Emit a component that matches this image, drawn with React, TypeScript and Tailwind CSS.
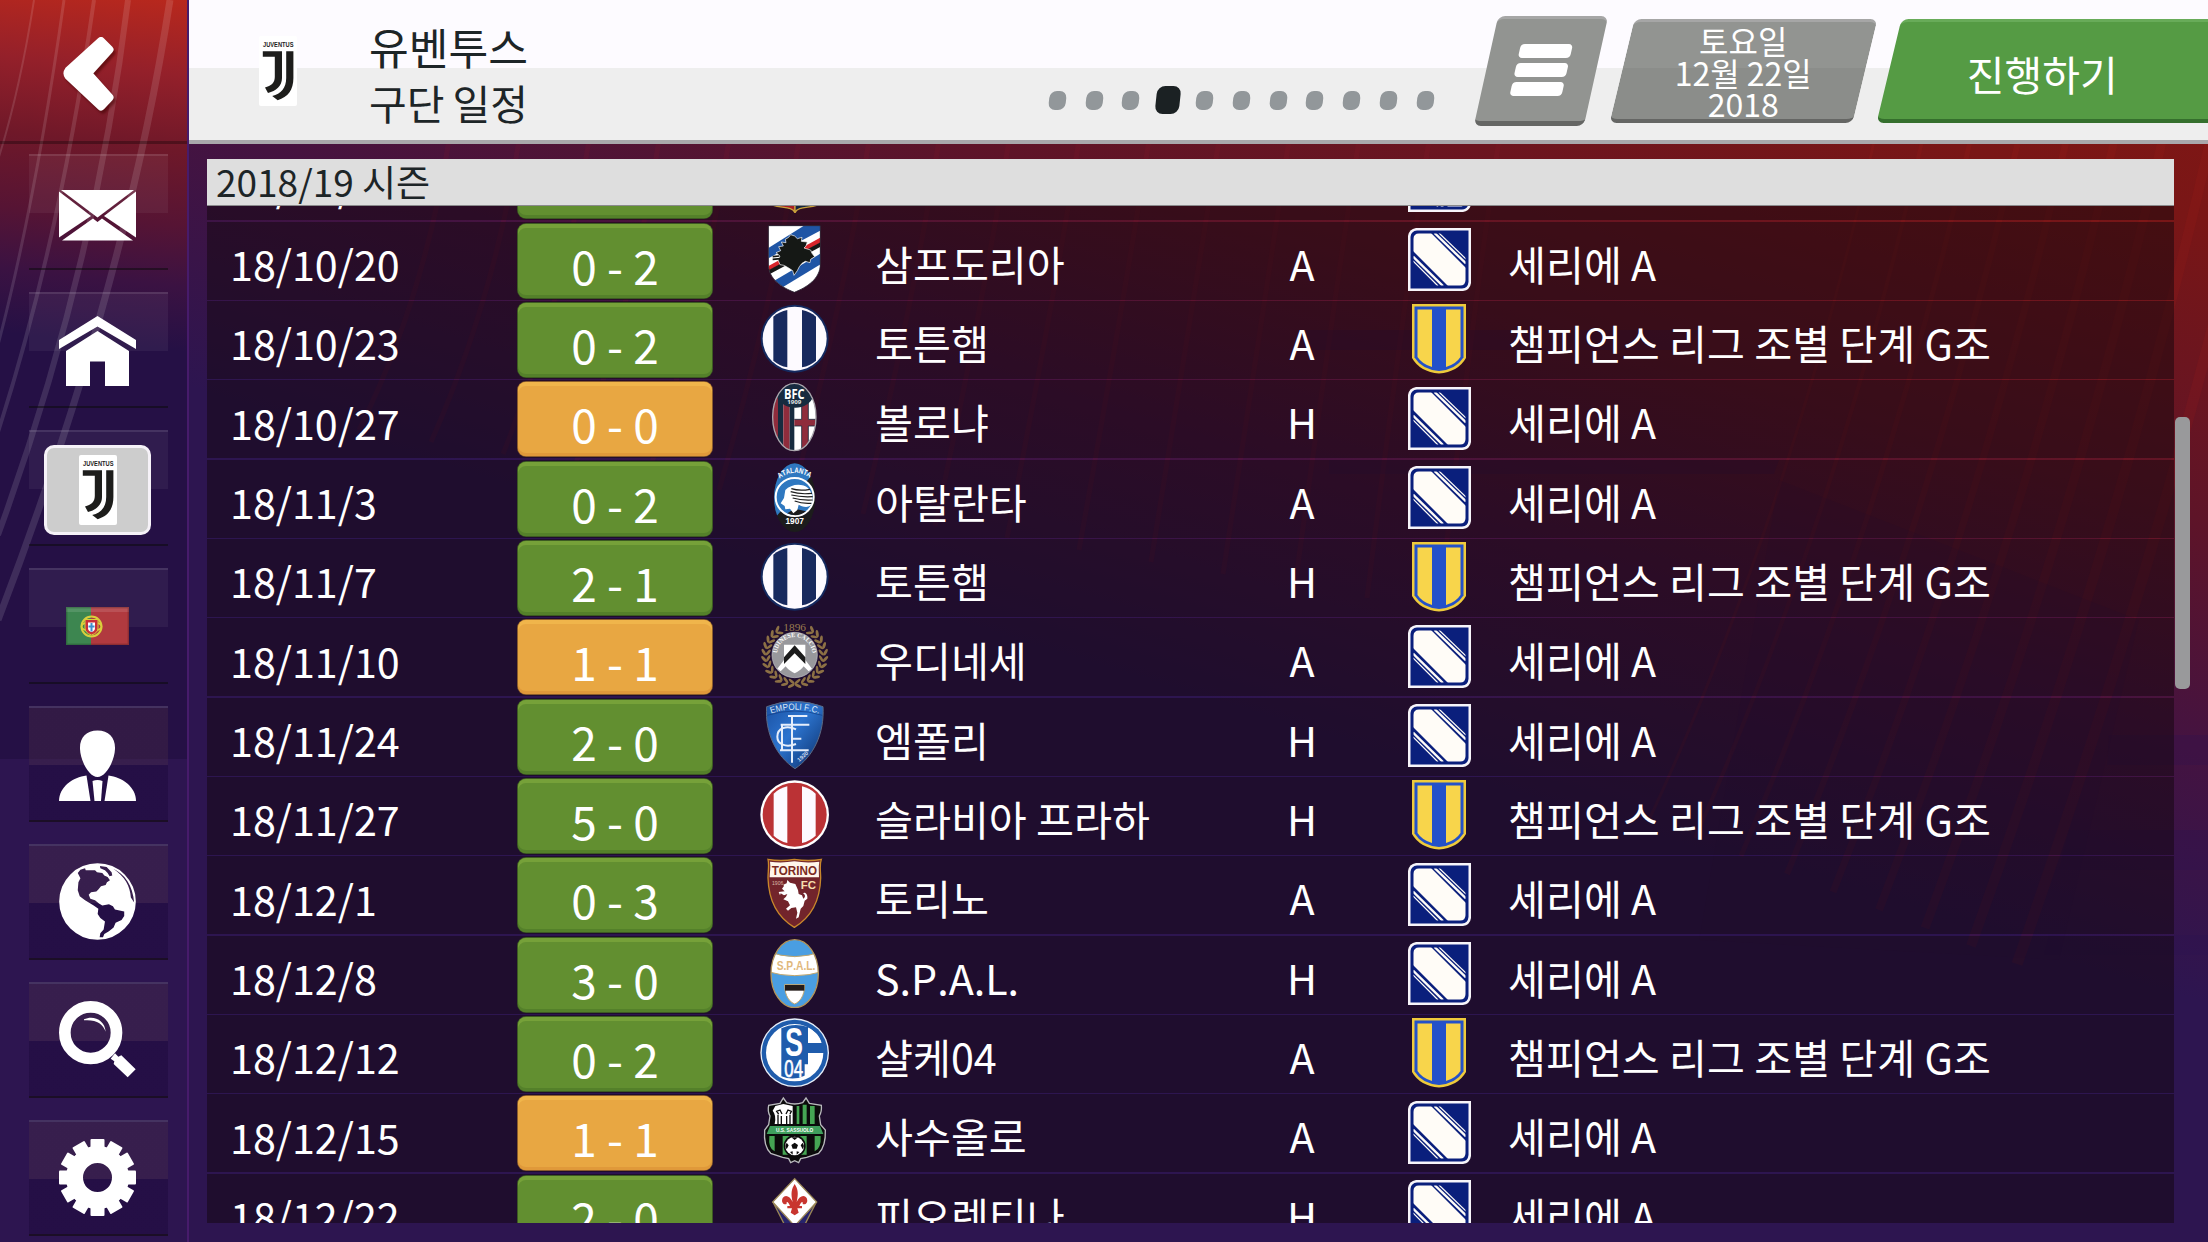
import type { ReactNode } from "react";

type Result = "win" | "draw";

interface Fixture {
  date: string;
  score: string;
  result: Result;
  team: string;
  crest: ReactNode;
  venue: "H" | "A";
  competition: "league" | "cup";
}

const LEAGUE = "세리에 A";
const CUP = "챔피언스 리그 조별 단계 G조";

/* ---------- crests ---------- */

function Crest({ children }: { children: ReactNode }) {
  return (
    <svg viewBox="0 0 210 210" className="block size-[70px]">
      {children}
    </svg>
  );
}

function JuventusCrest() {
  return (
    <svg viewBox="0 0 38 70" className="block h-[70px] w-[38px] shrink-0">
      <rect width="38" height="70" rx="2" fill="#fff" />
      <text
        x="4"
        y="10.5"
        fontSize="7.6"
        fontWeight="700"
        fontFamily="Liberation Sans, sans-serif"
        textLength="30.5"
        lengthAdjust="spacingAndGlyphs"
        fill="#1d1d1b"
      >
        JUVENTUS
      </text>
      <path d="M3.8 15.3H23V42C23 50 17 55 9 57L6 51.5C12 50 15.8 47 15.8 41V20.8H3.8Z" fill="#1d1d1b" />
      <path d="M27.2 15.3H34.4V42C34.4 54 29 61 18.7 64.2L13.2 60C22 58 27.2 52 27.2 42Z" fill="#1d1d1b" />
    </svg>
  );
}

function GenoaCrest() {
  return (
    <Crest>
      <path d="M40 10H105V206C98 188 66 192 40 184Z" fill="#a81f24" stroke="#c9a13b" strokeWidth="4" />
      <path d="M105 10H170V184C144 192 112 188 105 206Z" fill="#15263f" stroke="#c9a13b" strokeWidth="4" />
    </Crest>
  );
}

function SampdoriaCrest() {
  return (
    <Crest>
      <clipPath id="samp">
        <path d="M25 5H181V120C181 165 140 190 103 205C65 190 25 165 25 120Z" />
      </clipPath>
      <g clipPath="url(#samp)">
        <rect width="210" height="210" fill="#fff" />
        <path d="M15 78L140 0L190 -6L190 15L15 108Z" fill="#1f55a5" />
        <path d="M15 132L190 36V52L15 146Z" fill="#d8242b" />
        <path d="M15 144L190 50V64L15 158Z" fill="#161616" />
        <path d="M40 172L190 84V116L68 190Z" fill="#1f55a5" />
      </g>
      <path
        d="M76 46L86 40L92 32L104 36L112 44L126 40L124 52L142 54L138 66L132 72L152 78L156 88L164 98L152 106L150 116L136 112L126 118L118 128L112 140L102 154L98 140L86 132L72 124L60 122L54 108L60 96L48 86L62 80L56 68L70 66L64 54L78 56Z"
        fill="#151815"
        stroke="#fff"
        strokeWidth="2"
      />
      <path d="M38 98L58 96M38 106L62 104" stroke="#151815" strokeWidth="5" />
      <path d="M25 5H181V120C181 165 140 190 103 205C65 190 25 165 25 120Z" fill="none" stroke="#2a2433" strokeWidth="2.5" />
    </Crest>
  );
}

function TottenhamCrest() {
  return (
    <Crest>
      <circle cx="104" cy="107" r="102" fill="#14295f" />
      <circle cx="104" cy="107" r="96" fill="#fdfaff" />
      <path d="M40 41Q58 26 82 21V193Q58 188 40 173Z" fill="#182a5e" />
      <path d="M126 21Q150 26 168 41V173Q150 188 126 193Z" fill="#182a5e" />
    </Crest>
  );
}

function SlaviaCrest() {
  return (
    <Crest>
      <circle cx="104" cy="107" r="103" fill="#fff" />
      <circle cx="104" cy="107" r="96" fill="#bb3235" />
      <path d="M41 44Q58 28 82 22V192Q58 186 41 170Z" fill="#fdfaff" />
      <path d="M126 22Q150 28 167 44V170Q150 186 126 192Z" fill="#fdfaff" />
    </Crest>
  );
}

function BolognaCrest() {
  return (
    <Crest>
      <clipPath id="bologna">
        <ellipse cx="103" cy="105" rx="65" ry="101" />
      </clipPath>
      <g clipPath="url(#bologna)">
        <rect width="210" height="210" fill="#fff" />
        <rect x="30" width="24" height="210" fill="#8f2c3c" />
        <rect x="54" width="16" height="210" fill="#172b3f" />
        <rect x="70" width="19" height="210" fill="#8f2c3c" />
        <rect x="89" width="14" height="210" fill="#172b3f" />
        <rect x="125" width="20" height="210" fill="#8f2c3c" />
        <rect x="103" y="112" width="70" height="20" fill="#8f2c3c" />
        <path d="M125 60V112H103M145 60V112H170M103 132H125V210M145 210V132H170" fill="none" stroke="#172b3f" strokeWidth="2.5" />
        <path d="M45 0H160V40C150 90 62 90 50 40Z" fill="#172b3f" />
      </g>
      <text x="103" y="50" fontSize="43" textAnchor="middle" textLength="62" lengthAdjust="spacingAndGlyphs" fontWeight="700" fontFamily="Open Sans, sans-serif" fill="#fff">
        BFC
      </text>
      <text x="103" y="67" fontSize="18" textAnchor="middle" textLength="42" lengthAdjust="spacingAndGlyphs" fontWeight="700" fontFamily="Open Sans, sans-serif" fill="#e6e6e6">
        1909
      </text>
      <ellipse cx="103" cy="105" rx="65" ry="101" fill="none" stroke="#a8a5ab" strokeWidth="4" />
    </Crest>
  );
}

function AtalantaCrest() {
  return (
    <Crest>
      <clipPath id="atalanta">
        <ellipse cx="104" cy="107" rx="62" ry="103" />
      </clipPath>
      <g clipPath="url(#atalanta)">
        <rect width="210" height="210" fill="#1c1c1c" />
        <path d="M0 0H190L0 220Z" fill="#2f78c0" />
      </g>
      <circle cx="104" cy="105" r="57" fill="#2f78c0" stroke="#fff" strokeWidth="6" />
      <path d="M82 154L104 140L138 148A54 54 0 0 1 82 154Z" fill="#1c1c1c" />
      <path d="M76 84C92 66 126 62 144 78C160 94 160 116 152 130C140 140 124 132 116 128L112 144L100 154L90 140L76 142L74 132L62 124L72 108Z" fill="#fff" />
      <path
        d="M94 80Q118 88 150 82M92 89Q120 98 156 94M94 99Q122 106 158 104M98 108Q124 116 158 114M104 117Q126 126 154 124"
        fill="none"
        stroke="#1c1c1c"
        strokeWidth="3.5"
      />
      <path id="atalanta-arc" d="M58 50Q104 16 150 48" fill="none" />
      <text fontSize="23" fontWeight="700" fontFamily="Liberation Sans, sans-serif" fill="#fff">
        <textPath href="#atalanta-arc" startOffset="50%" textAnchor="middle" textLength="98" lengthAdjust="spacingAndGlyphs">
          ATALANTA
        </textPath>
      </text>
      <text x="104" y="187" fontSize="25" textAnchor="middle" fontWeight="700" fontFamily="Liberation Sans, sans-serif" fill="#fff">
        1907
      </text>
    </Crest>
  );
}

const LEAVES = Array.from({ length: 24 }, (_, i) => 34 + i * 12.7);

function UdineseCrest() {
  return (
    <Crest>
      {LEAVES.map((angle) => (
        <g key={angle} transform={`rotate(${angle} 104 105)`} fill="#8c7045">
          <ellipse cx="104" cy="12" rx="11" ry="4.4" transform={angle < 180 ? "rotate(-145 104 12)" : "rotate(-35 104 12)"} />
          <ellipse cx="104" cy="25" rx="11" ry="4" transform={angle < 180 ? "rotate(-215 104 25)" : "rotate(35 104 25)"} />
        </g>
      ))}
      <text x="104" y="32" fontSize="34" textAnchor="middle" fontFamily="Liberation Serif, serif" fill="#9a7c4e">
        1896
      </text>
      <circle cx="104" cy="105" r="68" fill="#98989c" stroke="#c4c4c8" strokeWidth="2" />
      <path id="udinese-arc" d="M51 104A53 53 0 0 1 157 104" fill="none" />
      <text fontSize="19" fontFamily="Liberation Serif, serif" fontWeight="700" fill="#fff">
        <textPath href="#udinese-arc" startOffset="50%" textAnchor="middle" textLength="158" lengthAdjust="spacingAndGlyphs">
          UDINESE CALCIO
        </textPath>
      </text>
      <path d="M72 74H136V124C136 140 120 152 104 160C88 152 72 140 72 124Z" fill="#fff" />
      <path d="M72 120L52 146L62 154L84 132ZM136 120L156 146L146 154L124 132Z" fill="#fff" />
      <path d="M104 76L136 112V132L104 100L72 132V112Z" fill="#1b1b1b" />
    </Crest>
  );
}

function EmpoliCrest() {
  return (
    <Crest>
      <linearGradient id="empoli" x1="0" x2="1" y1="0" y2="1">
        <stop offset="0" stopColor="#1a4fa0" />
        <stop offset="0.45" stopColor="#2c74cf" />
        <stop offset="1" stopColor="#0b2c66" />
      </linearGradient>
      <path d="M20 20Q104 -12 189 20C194 100 160 170 105 206C50 170 14 100 20 20Z" fill="url(#empoli)" stroke="#5b6b86" strokeWidth="3" />
      <path d="M22 46Q104 20 187 46" fill="none" stroke="#123d84" strokeWidth="2" />
      <path id="empoli-arc" d="M30 42Q104 16 180 42" fill="none" />
      <text fontSize="27" fontFamily="Liberation Sans, sans-serif" fill="#dfe9f7">
        <textPath href="#empoli-arc" startOffset="50%" textAnchor="middle" textLength="146" lengthAdjust="spacingAndGlyphs">
          EMPOLI F.C.
        </textPath>
      </text>
      <g fill="none" stroke="#e6eefb" strokeWidth="6">
        <path d="M84 48H142M62 74H148M96 48V188M66 74V152M96 116H124M60 151H146" />
        <path d="M108 88C80 74 52 84 52 110C52 132 76 144 108 132" />
      </g>
      <text x="118" y="186" fontSize="17" transform="rotate(-42 118 186)" fontFamily="Liberation Sans, sans-serif" fontWeight="700" fill="#cfdcf0">
        1920
      </text>
    </Crest>
  );
}

function TorinoCrest() {
  return (
    <Crest>
      <path d="M24 4Q62 11 103 4Q146 11 184 4C178 20 182 40 182 60C180 130 150 180 103 208C56 180 26 130 24 60C24 40 28 20 24 4Z" fill="#72242b" stroke="#c8872b" strokeWidth="4" />
      <path d="M30 11Q64 16 103 10Q142 16 178 11C175 26 177 44 177 58H29C29 44 33 26 30 11Z" fill="#fff6ea" />
      <text x="103" y="51" fontSize="38" textAnchor="middle" textLength="136" lengthAdjust="spacingAndGlyphs" fontFamily="Liberation Sans, sans-serif" fontWeight="700" fill="#7a2a22">
        TORINO
      </text>
      <text x="36" y="82" fontSize="17" textLength="34" lengthAdjust="spacingAndGlyphs" fontFamily="Liberation Sans, sans-serif" fill="#d9b9a8">
        1906
      </text>
      <text x="122" y="92" fontSize="34" textLength="46" lengthAdjust="spacingAndGlyphs" fontFamily="Liberation Sans, sans-serif" fontWeight="700" fill="#f6dfae">
        FC
      </text>
      <path
        d="M82 66L90 74L106 78L114 96L116 108L126 112L130 122C138 118 136 108 128 106C136 100 144 110 142 122L134 128L130 144L122 152L116 178L108 182L112 164L108 148L94 150L84 158L78 152L90 142L84 130L70 124L78 116L82 108L72 112L62 106L60 112L56 102L74 100L66 92L72 84L70 80L80 76Z"
        fill="#fff"
      />
    </Crest>
  );
}

function SpalCrest() {
  return (
    <Crest>
      <clipPath id="spal">
        <ellipse cx="104" cy="107" rx="71" ry="102" />
      </clipPath>
      <g clipPath="url(#spal)">
        <rect width="210" height="210" fill="#4a9ee2" />
        <path d="M20 38Q104 74 190 38V100Q104 126 20 100Z" fill="#fff" stroke="#c2a56a" strokeWidth="3" />
      </g>
      <text x="108" y="95" fontSize="38" textAnchor="middle" textLength="116" lengthAdjust="spacingAndGlyphs" fontFamily="Liberation Sans, sans-serif" fontWeight="700" fill="#dfb87c">
        S.P.A.L.
      </text>
      <path d="M74 140H134C134 176 118 192 104 198C90 192 74 176 74 140Z" fill="#fff" stroke="#c2a56a" strokeWidth="3" />
      <path d="M75 141H133V158H75Z" fill="#241c1a" />
      <ellipse cx="104" cy="107" rx="71" ry="102" fill="none" stroke="#b3945a" strokeWidth="4" />
    </Crest>
  );
}

function SchalkeCrest() {
  return (
    <Crest>
      <circle cx="104" cy="107" r="103" fill="#e8f0fa" />
      <circle cx="104" cy="107" r="99" fill="#1f5cac" />
      <circle cx="104" cy="107" r="86" fill="#fff" />
      <path d="M64 34Q100 16 144 30V78H192V108H144V160L134 176Q100 192 64 178Z" fill="#1f5cac" />
      <path d="M144 32Q176 46 184 76H144ZM144 108H188Q184 152 134 180V142H144Z" fill="#fff" />
      <text x="102" y="118" fontSize="122" textAnchor="middle" textLength="54" lengthAdjust="spacingAndGlyphs" fontFamily="Liberation Sans, sans-serif" fontWeight="700" fill="#fff">
        S
      </text>
      <text x="101" y="180" fontSize="72" textAnchor="middle" textLength="56" lengthAdjust="spacingAndGlyphs" fontFamily="Liberation Sans, sans-serif" fill="#fff" stroke="#fff" strokeWidth="2">
        04
      </text>
    </Crest>
  );
}

function SassuoloCrest() {
  return (
    <Crest>
      <path
        d="M70 6L80 20Q104 28 128 20L138 6L148 22L184 28Q186 46 178 60L182 86L196 102Q198 150 176 172L140 184L122 188L116 200L104 194L92 200L86 188L68 184L32 172Q10 150 14 102L26 86L30 60Q22 46 26 28L60 22Z"
        fill="#0b0b0b"
        stroke="#b9b9bd"
        strokeWidth="4"
      />
      <path d="M46 30L70 24L98 30V84H44Q50 58 38 44Z" fill="#fff" />
      <path d="M54 84V56M56 54L50 46L60 42L66 54M90 84V56M90 54L94 46L84 42L78 54M64 84V60M80 84V60" fill="none" stroke="#0b0b0b" strokeWidth="4" />
      <path d="M110 30H118V84H110ZM128 26H140V84H128ZM150 30H164V84H150Z" fill="#45a653" />
      <path d="M30 90H180L190 114H20Z" fill="#3f9f5d" />
      <text x="104" y="108" fontSize="18" textAnchor="middle" textLength="112" lengthAdjust="spacingAndGlyphs" fontFamily="Liberation Sans, sans-serif" fontWeight="700" fill="#fff">
        U.S. SASSUOLO
      </text>
      <path d="M28 120H44V166Q24 158 28 120ZM68 120H140V176H68ZM164 120H182Q184 158 164 166Z" fill="#45a653" />
      <circle cx="104" cy="150" r="33" fill="#0b0b0b" />
      <circle cx="104" cy="150" r="28" fill="#fff" />
      <path d="M104 140L114 147L110 158H98L94 147ZM94 124H114L104 132ZM80 140L86 148L80 160L76 150ZM128 140L122 148L128 160L132 150ZM90 168L98 166L98 176ZM118 168L110 166L110 176Z" fill="#0b0b0b" />
    </Crest>
  );
}

function FiorentinaCrest() {
  return (
    <Crest>
      <path d="M40 80L104 206L168 80Z" fill="#27246b" stroke="#9a8655" strokeWidth="4" />
      <path d="M104 8L170 78L104 150L38 78Z" fill="#fff" stroke="#9a8655" strokeWidth="4" />
      <path
        d="M104 24C114 40 116 52 110 78C118 60 132 54 140 66C146 80 136 88 128 84C130 76 124 74 118 90H126V97H112L116 110L104 118L92 110L96 97H82V90H90C84 74 78 76 80 84C72 88 62 80 68 66C76 54 90 60 98 78C92 52 94 40 104 24Z"
        fill="#c8352f"
      />
    </Crest>
  );
}

function LeagueBadge() {
  return (
    <svg viewBox="0 0 63 63" className="block size-[63px]">
      <clipPath id="league-inner">
        <path d="M11 5.5H57.5V52Q57.5 57.5 52 57.5H5.5V11Q5.5 5.5 11 5.5Z" />
      </clipPath>
      <path d="M8 0H63V55Q62 62 55 63H0V8Q1 1 8 0Z" fill="#f7f5fa" />
      <path d="M9 2.5H60.5V54Q60 60 54 60.5H2.5V9Q3 3 9 2.5Z" fill="#0a1f7c" />
      <g clipPath="url(#league-inner)">
        <path d="M5 5H23L58 40V58H40L5 23Z" fill="#fffcf7" />
        <path d="M26.5 5L58 35.5" stroke="#fffcf7" strokeWidth="2.4" />
        <path d="M31 5L58 31" stroke="#fffcf7" strokeWidth="1.2" />
        <path d="M5 28.5L35 58" stroke="#fffcf7" strokeWidth="2.4" />
        <path d="M5 33L30 58" stroke="#fffcf7" strokeWidth="1.2" />
      </g>
    </svg>
  );
}

function CupBadge() {
  return (
    <svg viewBox="0 0 54 70" className="block h-[70px] w-[54px]">
      <path d="M0 0H54V54Q46 68 27 69.5Q8 68 0 54Z" fill="#efcb3b" />
      <path d="M2.5 2.5H51.5V53.5Q44 65.5 27 67Q10 65.5 2.5 53.5Z" fill="#2351c9" />
      <path d="M5.5 5.5H20V63Q10 60 5.5 53Z" fill="#f8d54b" />
      <path d="M34 5.5H48.5V53Q44 60 34 63Z" fill="#f8d54b" />
    </svg>
  );
}

/* ---------- sidebar icons ---------- */

function MailIcon() {
  return (
    <svg viewBox="0 0 77 51" className="mt-[7px] block h-[51px] w-[77px]" fill="#fff">
      <path d="M2 0H75L38.5 27.5Z" />
      <path d="M0 1.5L32 26L0 47.5Z" />
      <path d="M77 1.5L45 26L77 47.5Z" />
      <path d="M3 50.5L34 28.5L38.5 32L43 28.5L74 50.5Z" />
    </svg>
  );
}

function HomeIcon() {
  return (
    <svg viewBox="0 0 77 70" className="mt-[2px] block h-[70px] w-[77px]" fill="#fff">
      <path d="M38.5 0L77 24V33L38.5 10.5L0 33V24Z" />
      <path d="M38.5 15L70 35V70H46V45.5H31V70H7V35Z" />
    </svg>
  );
}

function FlagIcon() {
  return (
    <svg viewBox="0 0 63 38" className="block h-[38px] w-[63px]">
      <rect width="63" height="38" fill="#b13a3f" />
      <rect width="25" height="38" fill="#3d8650" />
      <rect x="0" width="63" height="5" fill="#fff" opacity="0.12" />
      <rect x="0.7" y="0.7" width="61.6" height="36.6" fill="none" stroke="#000" strokeOpacity="0.2" strokeWidth="1.4" />
      <circle cx="25.5" cy="19.5" r="10" fill="none" stroke="#d8cf3c" strokeWidth="2" />
      <ellipse cx="25.5" cy="19.5" rx="10" ry="4.5" fill="none" stroke="#d8cf3c" strokeWidth="1.6" />
      <path d="M19 12.5H32V21Q32 26 25.5 28Q19 26 19 21Z" fill="#c9303a" stroke="#d8cf3c" strokeWidth="1" />
      <path d="M22 15.5H29V21Q29 24 25.5 25Q22 24 22 21Z" fill="#fff" />
      <path d="M25.5 16V24.5M22.5 19.5H28.5" stroke="#3f8fd0" strokeWidth="2" />
    </svg>
  );
}

function ManagerIcon() {
  return (
    <svg viewBox="0 0 77 71" className="mt-[4px] block h-[71px] w-[77px]" fill="#fff">
      <path d="M38.5 0.5C50 0.5 56.5 8 56 19C55.5 31 47 47 38.5 47C30 47 21.5 31 21 19C20.5 8 27 0.5 38.5 0.5Z" />
      <path d="M0 71C0 57 14 47 27.5 45.5L31.5 71Z" />
      <path d="M77 71C77 57 63 47 49.5 45.5L45.5 71Z" />
      <path d="M33.5 51Q38.5 49 43.5 51L42 71H35.5Z" />
    </svg>
  );
}

function GlobeIcon() {
  return (
    <svg viewBox="42 38 231 232" className="block h-[77px] w-[77px]" fill="#fff">
      <path
        fillRule="evenodd"
        d="M42 154A115.5 115.5 0 1 0 273 154A115.5 115.5 0 1 0 42 154ZM98 68L106 58L120 54L122 60L150 60L156 66L172 68L178 76L188 80L195 90L186 96L182 104L168 108L160 118L154 124L138 126L131 134L136 146L150 150L162 160L172 166L192 162L204 168L210 178L238 184L238 198L230 210L212 218L206 232L192 244L178 252L174 262L164 262L166 250L176 238L180 214L166 204L158 192L160 176L146 166L120 150L104 138L98 120L100 96L106 84ZM165 47L185 50L200 66L202 76L194 78L188 68L180 60L166 54ZM205 55C238 70 264 105 268 157L258 142C256 108 240 78 205 55Z"
      />
    </svg>
  );
}

function SearchIcon() {
  return (
    <svg viewBox="42 455 231 231" className="block h-[77px] w-[77px]" fill="#fff">
      <circle cx="137" cy="550" r="77.5" fill="none" stroke="#fff" strokeWidth="35" />
      <path d="M117 510C145 496 180 512 182 547C174 524 154 510 117 513Z" />
      <path d="M197 628L210 612L220 622L229 618L272 660L248 684L206 644L208 636Z" />
    </svg>
  );
}

const TEETH = Array.from({ length: 12 }, (_, i) => i * 30);

function GearIcon() {
  return (
    <svg viewBox="-38.5 -38.5 77 77" className="block h-[77px] w-[77px]" fill="#fff">
      <circle r="23" fill="none" stroke="#fff" strokeWidth="17" />
      {TEETH.map((angle) => (
        <rect key={angle} x="-7" y="-38.5" width="14" height="11" rx="1" transform={`rotate(${angle})`} />
      ))}
    </svg>
  );
}

function ActiveClubTile() {
  return (
    <div className="mt-[4px] flex h-[90px] w-[107px] shrink-0 items-center justify-center rounded-[10px] border-[3px] border-[#f6f2f8] bg-[#cdcdcd]">
      <JuventusCrest />
    </div>
  );
}

/* ---------- data ---------- */

const nav = [
  { id: "mail", icon: <MailIcon /> },
  { id: "home", icon: <HomeIcon /> },
  { id: "club", icon: <ActiveClubTile /> },
  { id: "nation", icon: <FlagIcon /> },
  { id: "manager", icon: <ManagerIcon /> },
  { id: "world", icon: <GlobeIcon /> },
  { id: "search", icon: <SearchIcon /> },
  { id: "settings", icon: <GearIcon /> },
];

const fixtures: Fixture[] = [
  { date: "18/10/6", score: "2 - 0", result: "win", team: "제노아", crest: <GenoaCrest />, venue: "H", competition: "league" },
  { date: "18/10/20", score: "0 - 2", result: "win", team: "삼프도리아", crest: <SampdoriaCrest />, venue: "A", competition: "league" },
  { date: "18/10/23", score: "0 - 2", result: "win", team: "토튼햄", crest: <TottenhamCrest />, venue: "A", competition: "cup" },
  { date: "18/10/27", score: "0 - 0", result: "draw", team: "볼로냐", crest: <BolognaCrest />, venue: "H", competition: "league" },
  { date: "18/11/3", score: "0 - 2", result: "win", team: "아탈란타", crest: <AtalantaCrest />, venue: "A", competition: "league" },
  { date: "18/11/7", score: "2 - 1", result: "win", team: "토튼햄", crest: <TottenhamCrest />, venue: "H", competition: "cup" },
  { date: "18/11/10", score: "1 - 1", result: "draw", team: "우디네세", crest: <UdineseCrest />, venue: "A", competition: "league" },
  { date: "18/11/24", score: "2 - 0", result: "win", team: "엠폴리", crest: <EmpoliCrest />, venue: "H", competition: "league" },
  { date: "18/11/27", score: "5 - 0", result: "win", team: "슬라비아 프라하", crest: <SlaviaCrest />, venue: "H", competition: "cup" },
  { date: "18/12/1", score: "0 - 3", result: "win", team: "토리노", crest: <TorinoCrest />, venue: "A", competition: "league" },
  { date: "18/12/8", score: "3 - 0", result: "win", team: "S.P.A.L.", crest: <SpalCrest />, venue: "H", competition: "league" },
  { date: "18/12/12", score: "0 - 2", result: "win", team: "샬케04", crest: <SchalkeCrest />, venue: "A", competition: "cup" },
  { date: "18/12/15", score: "1 - 1", result: "draw", team: "사수올로", crest: <SassuoloCrest />, venue: "A", competition: "league" },
  { date: "18/12/22", score: "2 - 0", result: "win", team: "피오렌티나", crest: <FiorentinaCrest />, venue: "H", competition: "league" },
];

const resultStyles: Record<Result, string> = {
  win: "bg-[#628f30] shadow-[inset_0_4px_0_#76a139,inset_0_-3px_0_#54802a,0_0_0_1px_#3d5a22]",
  draw: "bg-[#e8a742] shadow-[inset_0_4px_0_#f0b54b,inset_0_-3px_0_#e0993a,0_0_0_1px_#8a5c2c]",
};

/* ---------- layout ---------- */

function BackdropStreaks() {
  return (
    <svg viewBox="0 0 2019 1242" className="pointer-events-none absolute inset-0 h-full w-full" fill="none">
      {Array.from({ length: 9 }, (_, i) => (
        <path
          key={i}
          d={`M${1690 + i * 48} 120Q${1600 + i * 48} 520 ${1460 + i * 46} ${820 + i * 18}`}
          stroke="#b8201c"
          strokeOpacity={0.12}
          strokeWidth={3 + i}
        />
      ))}
      {Array.from({ length: 16 }, (_, i) => (
        <path
          key={i}
          d={`M${260 + i * 70} 140Q${235 + i * 70} 300 ${170 + i * 72} ${430 + i * 12}`}
          stroke="#a01c28"
          strokeOpacity={0.12}
          strokeWidth={5}
        />
      ))}
      <g fill="#2a1150" fillOpacity="0.22">
        <path d="M1140 460H1590L1585 474H1140ZM1110 330H1510L1500 350H1110Z" />
        <path d="M1920 735H2019V765H1918ZM1880 830H2019V870H1870ZM1860 935H2019V955H1855Z" />
        <path d="M1590 480L1950 620L1870 960L1510 940Z" fillOpacity="0.14" />
      </g>
    </svg>
  );
}

function Sidebar() {
  return (
    <aside className="relative h-full w-[189px] shrink-0 overflow-hidden border-r-2 border-[#471b6b] bg-[linear-gradient(transparent_759px,#2d1550_759px),linear-gradient(186deg,#b8281d_0px,#94202a_75px,#6f1829_150px,#561434_225px,#3b1242_285px,#251045_350px)]">
      <svg viewBox="0 0 187 1242" className="pointer-events-none absolute inset-0 h-full w-full" fill="none" stroke="#fff" strokeOpacity="0.12">
        <path d="M170 0Q125 290 -2 620" strokeWidth="7" />
        <path d="M128 0Q95 270 -2 535" strokeWidth="6" />
        <path d="M94 0Q60 240 -2 432" strokeWidth="4" />
        <path d="M64 0Q36 200 -2 345" strokeWidth="3" />
        <path d="M34 0Q20 90 -2 160" strokeWidth="2" />
      </svg>
      <button className="relative flex h-[144px] w-full items-center border-b-[3px] border-black/30 pl-[60px] pt-[6px]">
        <svg viewBox="60 32 60 84" className="block h-[84px] w-[60px] drop-shadow-[2px_3px_1px_rgba(60,0,0,0.5)]">
          <path
            d="M101 41L109.5 49.5L88 73.3L109.5 97.5L101 106.5L68.5 76Q66.5 73.3 68.5 70.5Z"
            fill="#fff"
            stroke="#fff"
            strokeWidth="8"
            strokeLinejoin="round"
          />
        </svg>
      </button>
      <nav className="relative ml-[29px] mt-[10px] flex w-[139px] flex-col gap-[22.5px]">
        {nav.map((item, i) => (
          <button
            key={item.id}
            className={`flex h-[115.5px] shrink-0 items-center justify-center border-b-2 border-t-2 border-b-black/50 border-t-white/15 pr-[1.5px] ${
              i < 4
                ? "bg-[linear-gradient(rgba(255,255,255,0.05)_57px,transparent_57px)]"
                : "bg-[linear-gradient(rgba(80,50,70,0.3)_57px,rgba(35,14,68,0.85)_57px)]"
            }`}
          >
            {item.icon}
          </button>
        ))}
      </nav>
    </aside>
  );
}

function PageDots() {
  return (
    <div className="flex h-[28px] items-center">
      {Array.from({ length: 11 }, (_, i) => (
        <span key={i} className="flex w-[36.8px] justify-center">
          {i === 3 ? (
            <span className="h-[28px] w-[24px] -skew-x-6 rounded-[8px] bg-[#1b2123]" />
          ) : (
            <span className="h-[19px] w-[17px] -skew-x-6 rounded-[7px] bg-[#92979a]" />
          )}
        </span>
      ))}
    </div>
  );
}

function Header() {
  return (
    <header className="relative flex h-[144px] shrink-0 overflow-hidden border-b-4 border-[#a9a8ab] bg-[linear-gradient(#fdfbff_0px,#fdfbff_68px,#eeeeee_68px)] text-[#1d2527]">
      <div className="ml-[70px] mt-[36px] shrink-0">
        <JuventusCrest />
      </div>
      <div className="ml-[72px] mt-[19px] w-[640px] shrink-0 leading-[54.5px]">
        <h1 className="text-[43.2px]">유벤투스</h1>
        <h2 className="pt-px text-[41px] [word-spacing:-1px]">구단 일정</h2>
      </div>
      <div className="ml-[30px] mt-[86px] shrink-0">
        <PageDots />
      </div>
      <button className="ml-[42px] mt-[16px] flex h-[110px] w-[110px] shrink-0 -skew-x-[12.5deg] flex-col items-center justify-center gap-[5px] rounded-[7px] border-b-[5px] border-t-[3px] border-b-[#656664] border-t-[#a6a6a6] bg-[#929491]">
        <span className="h-[14px] w-[52px] rounded-[4px] bg-white" />
        <span className="h-[14px] w-[52px] rounded-[4px] bg-white" />
        <span className="h-[14px] w-[52px] rounded-[4px] bg-white" />
      </button>
      <div className="relative ml-[26px] mt-[19px] h-[104px] w-[243px] shrink-0 pt-[6px] text-center text-[32px] leading-[31.5px] text-white">
        <div className="absolute inset-0 -skew-x-[13.5deg] rounded-[7px] border-b-[4px] border-t-[3px] border-b-[#656664] border-t-[#a6a6a6] bg-[linear-gradient(#929491_46px,#8b8d8a_46px)]" />
        <p className="relative">토요일</p>
        <p className="relative">12월 22일</p>
        <p className="relative">2018</p>
      </div>
      <button className="relative ml-[24px] mt-[19px] h-[104px] w-[360px] shrink-0 text-[41px] leading-[60px] text-white">
        <span className="absolute inset-0 -skew-x-[13.5deg] rounded-[7px] border-b-[4px] border-t-[3px] border-b-[#356f2d] border-t-[#68ab59] bg-[#559b44]" />
        <span className="relative block w-[307px] pt-[4px] text-center">진행하기</span>
      </button>
    </header>
  );
}

function FixtureRow({ fixture }: { fixture: Fixture }) {
  const isCup = fixture.competition === "cup";
  return (
    <div className="flex h-[79.33px] shrink-0 pb-[1.5px]">
      <div className="flex h-full w-full items-center bg-[rgba(17,6,12,0.5)] pl-[23px]">
        <span className="w-[288px] pt-[6px]">{fixture.date}</span>
        <span
          className={`flex h-[74px] w-[194px] items-center justify-center rounded-[8px] pt-[8px] text-[46px] ${resultStyles[fixture.result]}`}
        >
          {fixture.score}
        </span>
        <span className="ml-[48px] w-[70px] pb-[4px]">{fixture.crest}</span>
        <span className="ml-[45px] w-[387px] pt-[5px]">{fixture.team}</span>
        <span className="w-[80px] pt-[5px] text-center">{fixture.venue}</span>
        <span className="ml-[53px] flex w-[88px] justify-center pb-[2px]">{isCup ? <CupBadge /> : <LeagueBadge />}</span>
        <span className="ml-[25px] pt-[5px]">{isCup ? CUP : LEAGUE}</span>
      </div>
    </div>
  );
}

export default function App() {
  return (
    <div className="flex h-[1242px] w-[2208px] overflow-hidden bg-[#2d1550] font-['Noto_Sans_CJK_KR',sans-serif] text-white [font-kerning:none]">
      <Sidebar />
      <div className="relative flex min-w-0 flex-1 flex-col bg-[linear-gradient(197deg,#861814_0%,#791616_12%,#5e1428_28%,#451340_40%,#2d1550_54%,#2d1550_100%)]">
        <BackdropStreaks />
        <Header />
        <main className="relative flex min-h-0 flex-1 pb-[19px] pl-[18px] pt-[15px]">
          <section className="flex w-[1967px] flex-col overflow-hidden">
            <h3 className="flex h-[47px] shrink-0 items-center border-b border-[#8a8a8c] bg-[#dedede] pl-[9px] text-[37px] leading-none text-[#1d2527]">
              <span className="-mt-px">2018/19 시즌</span>
            </h3>
            <div className="min-h-0 flex-1 overflow-hidden">
              <div className="-mt-[63.5px] flex flex-col whitespace-nowrap text-[41.25px] leading-none">
                {fixtures.map((fixture) => (
                  <FixtureRow key={fixture.date} fixture={fixture} />
                ))}
              </div>
            </div>
          </section>
          <div className="ml-px mt-[258px] h-[272px] w-[15px] rounded-[5px] bg-[#99999b]" />
        </main>
      </div>
    </div>
  );
}
